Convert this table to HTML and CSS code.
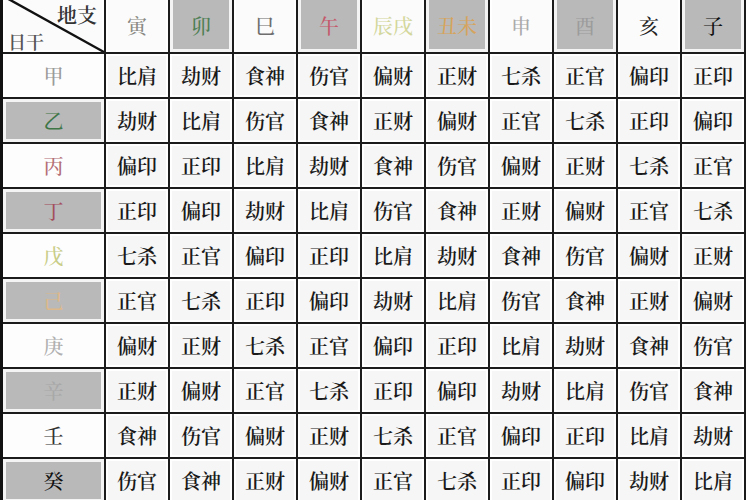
FILE: index.html
```html
<!DOCTYPE html>
<html lang="zh-CN">
<head>
<meta charset="utf-8">
<title>十神表</title>
<link rel="stylesheet" href="styles.css">
</head>
<body>
<div class="grid">
  <div class="cell corner">
    <svg class="diag" viewBox="0 0 101 56" preserveAspectRatio="none"><line x1="0" y1="0" x2="101" y2="56" stroke="#111" stroke-width="2.4"/></svg>
    <span class="c-top">地支</span>
    <span class="c-bot">日干</span>
  </div>
  <div class="cell head c-yin">寅</div>
  <div class="cell head shade c-mao">卯</div>
  <div class="cell head c-si">巳</div>
  <div class="cell head shade c-wu">午</div>
  <div class="cell head c-chen">辰戌</div>
  <div class="cell head shade c-chou">丑未</div>
  <div class="cell head c-shen">申</div>
  <div class="cell head shade c-you">酉</div>
  <div class="cell head c-hai">亥</div>
  <div class="cell head shade c-zi">子</div>

  <div class="cell stem c-jia">甲</div>
  <div class="cell">比肩</div><div class="cell">劫财</div><div class="cell">食神</div><div class="cell">伤官</div><div class="cell">偏财</div><div class="cell">正财</div><div class="cell">七杀</div><div class="cell">正官</div><div class="cell">偏印</div><div class="cell">正印</div>

  <div class="cell stem shade c-yi">乙</div>
  <div class="cell">劫财</div><div class="cell">比肩</div><div class="cell">伤官</div><div class="cell">食神</div><div class="cell">正财</div><div class="cell">偏财</div><div class="cell">正官</div><div class="cell">七杀</div><div class="cell">正印</div><div class="cell">偏印</div>

  <div class="cell stem c-bing">丙</div>
  <div class="cell">偏印</div><div class="cell">正印</div><div class="cell">比肩</div><div class="cell">劫财</div><div class="cell">食神</div><div class="cell">伤官</div><div class="cell">偏财</div><div class="cell">正财</div><div class="cell">七杀</div><div class="cell">正官</div>

  <div class="cell stem shade c-ding">丁</div>
  <div class="cell">正印</div><div class="cell">偏印</div><div class="cell">劫财</div><div class="cell">比肩</div><div class="cell">伤官</div><div class="cell">食神</div><div class="cell">正财</div><div class="cell">偏财</div><div class="cell">正官</div><div class="cell">七杀</div>

  <div class="cell stem c-wu2">戊</div>
  <div class="cell">七杀</div><div class="cell">正官</div><div class="cell">偏印</div><div class="cell">正印</div><div class="cell">比肩</div><div class="cell">劫财</div><div class="cell">食神</div><div class="cell">伤官</div><div class="cell">偏财</div><div class="cell">正财</div>

  <div class="cell stem shade c-ji">己</div>
  <div class="cell">正官</div><div class="cell">七杀</div><div class="cell">正印</div><div class="cell">偏印</div><div class="cell">劫财</div><div class="cell">比肩</div><div class="cell">伤官</div><div class="cell">食神</div><div class="cell">正财</div><div class="cell">偏财</div>

  <div class="cell stem c-geng">庚</div>
  <div class="cell">偏财</div><div class="cell">正财</div><div class="cell">七杀</div><div class="cell">正官</div><div class="cell">偏印</div><div class="cell">正印</div><div class="cell">比肩</div><div class="cell">劫财</div><div class="cell">食神</div><div class="cell">伤官</div>

  <div class="cell stem shade c-xin">辛</div>
  <div class="cell">正财</div><div class="cell">偏财</div><div class="cell">正官</div><div class="cell">七杀</div><div class="cell">正印</div><div class="cell">偏印</div><div class="cell">劫财</div><div class="cell">比肩</div><div class="cell">伤官</div><div class="cell">食神</div>

  <div class="cell stem c-ren">壬</div>
  <div class="cell">食神</div><div class="cell">伤官</div><div class="cell">偏财</div><div class="cell">正财</div><div class="cell">七杀</div><div class="cell">正官</div><div class="cell">偏印</div><div class="cell">正印</div><div class="cell">比肩</div><div class="cell">劫财</div>

  <div class="cell stem shade c-gui">癸</div>
  <div class="cell">伤官</div><div class="cell">食神</div><div class="cell">正财</div><div class="cell">偏财</div><div class="cell">正官</div><div class="cell">七杀</div><div class="cell">正印</div><div class="cell">偏印</div><div class="cell">劫财</div><div class="cell">比肩</div>
</div>
</body>
</html>
```
FILE: styles.css
```css
html, body {
  margin: 0;
  padding: 0;
  background: #ffffff;
  overflow: hidden;
}

.grid {
  display: grid;
  grid-template-columns: 101px repeat(10, 62px);
  grid-template-rows: 56px repeat(10, 43px);
  gap: 2px;
  width: max-content;
  margin-top: -4px;
  background: #1c1c1c;
  border-left: 3px solid #111111;
  border-right: 2px solid #1a1a1a;
  font-family: "Noto Serif CJK SC", "Noto Sans CJK SC", serif;
  font-size: 20px;
  font-weight: 600;
  color: #1a1a1a;
}

.cell {
  background: #f6f6f6;
  display: flex;
  align-items: center;
  justify-content: center;
  line-height: 1;
  box-shadow: inset 0 0 0 2px #ffffff;
}

.head {
  background: #fbfbfb;
  padding-top: 4px;
  font-weight: 500;
}

.stem {
  background: #fdfdfd;
  font-weight: 500;
}

.shade {
  background: #b9b9b9;
  box-shadow: inset 0 0 0 3px #f4f4f4;
}

.corner {
  position: relative;
  background: #fbfbfb;
  display: flex;
  flex-direction: column;
  justify-content: space-between;
  align-items: stretch;
  padding: 9px 7px 2px 5px;
  box-sizing: border-box;
}

.diag {
  position: absolute;
  left: 0;
  top: 0;
  width: 100%;
  height: 100%;
}

.c-top {
  align-self: flex-end;
  font-size: 20px;
  color: #333333;
}

.c-bot {
  align-self: flex-start;
  font-size: 18px;
  color: #555555;
}

.c-yin { color: #8a8a84; }
.c-mao { color: #4f7f55; }
.c-si { color: #6e6e6e; }
.c-wu { color: #c45a6c; }
.c-chen { color: #d3d79c; }
.c-chou { color: #d6a45c; }
.c-shen { color: #aaaaaa; }
.c-you { color: #9c9c9c; }
.c-hai { color: #222222; }
.c-zi { color: #111111; }

.c-jia { color: #9a9a9a; }
.c-yi { color: #3f7648; }
.c-bing { color: #b46f76; }
.c-ding { color: #a44e5e; }
.c-wu2 { color: #c9cd88; }
.c-ji { color: #dcb88a; }
.c-geng { color: #b0b0b0; }
.c-xin { color: #a8a8a8; }
.c-ren { color: #333333; }
.c-gui { color: #111111; }
```
